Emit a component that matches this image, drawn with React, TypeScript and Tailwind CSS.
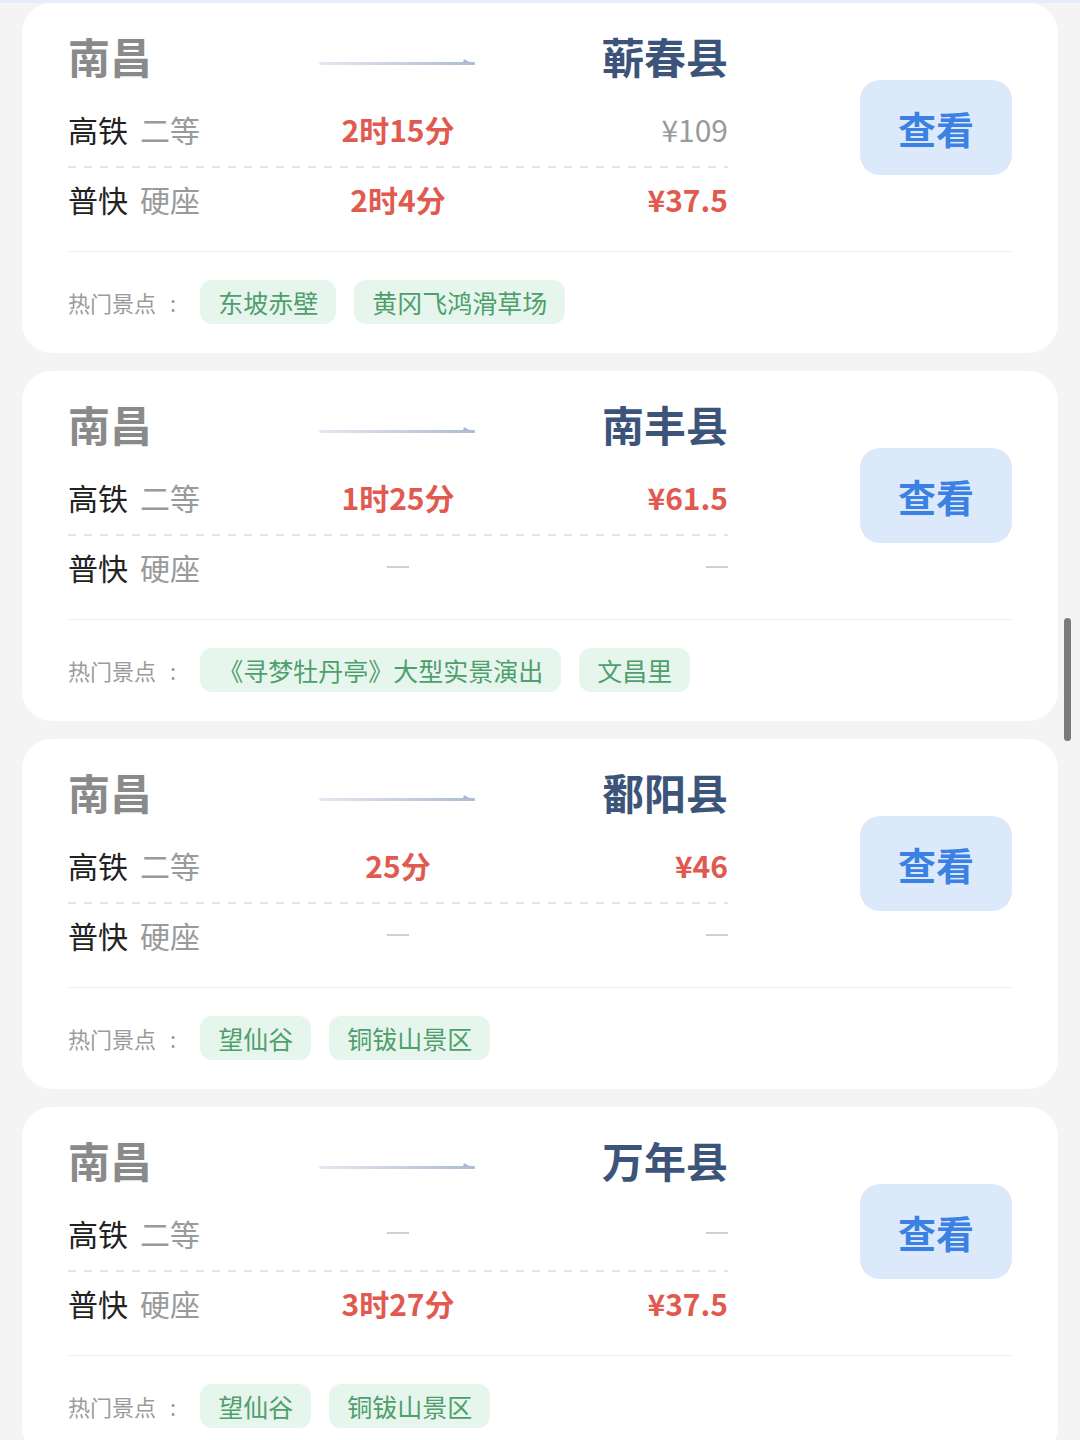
import React from 'react'

type Row = { label: string; seat: string; time?: string; price?: string; muted?: boolean }
type Route = { to: string; rows: Row[]; spots: string[] }

const routes: Route[] = [
  {
    to: '蕲春县',
    rows: [
      { label: '高铁', seat: '二等', time: '2时15分', price: '¥109', muted: true },
      { label: '普快', seat: '硬座', time: '2时4分', price: '¥37.5' },
    ],
    spots: ['东坡赤壁', '黄冈飞鸿滑草场'],
  },
  {
    to: '南丰县',
    rows: [
      { label: '高铁', seat: '二等', time: '1时25分', price: '¥61.5' },
      { label: '普快', seat: '硬座' },
    ],
    spots: ['《寻梦牡丹亭》大型实景演出', '文昌里'],
  },
  {
    to: '鄱阳县',
    rows: [
      { label: '高铁', seat: '二等', time: '25分', price: '¥46' },
      { label: '普快', seat: '硬座' },
    ],
    spots: ['望仙谷', '铜钹山景区'],
  },
  {
    to: '万年县',
    rows: [
      { label: '高铁', seat: '二等' },
      { label: '普快', seat: '硬座', time: '3时27分', price: '¥37.5' },
    ],
    spots: ['望仙谷', '铜钹山景区'],
  },
]

function Arrow() {
  return (
    <svg width="158" height="12" viewBox="0 0 158 12" className="mt-[10px]">
      <defs>
        <linearGradient id="arrowGrad" x1="0" x2="1" y1="0" y2="0">
          <stop offset="0" stopColor="#e3e8f0" />
          <stop offset="1" stopColor="#aebbd2" />
        </linearGradient>
      </defs>
      <rect x="0" y="7" width="156" height="3" rx="1.5" fill="url(#arrowGrad)" />
      <path d="M144 7.5 L156 7.5 L156 10 L145 4 Z" fill="#aebbd2" />
    </svg>
  )
}

function Dash() {
  return <span className="inline-block w-[22px] h-[2px] bg-[#cfcfcf]" />
}

function TrainRow({ row }: { row: Row }) {
  return (
    <div className="grid grid-cols-3 items-center h-[44px] text-[30px] leading-[44px]">
      <div className="flex items-center">
        <span className="text-[#222]">{row.label}</span>
        <span className="ml-[12px] text-[#9a9a9a]">{row.seat}</span>
      </div>
      <div className="flex justify-center items-center">
        {row.time ? <span className="font-bold text-[#e15a50]">{row.time}</span> : <Dash />}
      </div>
      <div className="flex justify-end items-center">
        {row.price ? (
          <span className={row.muted ? 'text-[#9a9a9a]' : 'font-bold text-[#e15a50]'}>{row.price}</span>
        ) : (
          <Dash />
        )}
      </div>
    </div>
  )
}

function RouteCard({ route }: { route: Route }) {
  return (
    <div className="mx-[22px] h-[350px] bg-white rounded-[30px] px-[46px] pt-[28px]">
      <div className="flex items-start justify-between">
        <div className="w-[660px]">
          {/* Title */}
          <div className="grid grid-cols-3 items-center h-[50px] text-[42px] leading-[50px] font-bold">
            <span className="text-[#8a8a8a]">南昌</span>
            <div className="flex justify-center">
              <Arrow />
            </div>
            <span className="text-right text-[#3c5479]">{route.to}</span>
          </div>

          <div className="mt-[26px]">
            <TrainRow row={route.rows[0]} />
          </div>
          <div className="mt-[15px] h-[2px] bg-[repeating-linear-gradient(90deg,#e3e6eb_0_8px,transparent_8px_16px)]" />
          <div className="mt-[9px]">
            <TrainRow row={route.rows[1]} />
          </div>
        </div>

        <button className="mt-[49px] w-[152px] h-[95px] rounded-[20px] bg-[#dbe9fb] text-[38px] font-bold text-[#3b81e4] leading-none">
          查看
        </button>
      </div>

      <div className="mt-[30px] h-[1px] bg-[#efefef]" />

      {/* Spots */}
      <div className="mt-[28px] flex items-center h-[44px]">
        <span className="text-[22px] text-[#9b9b9b]">热门景点</span>
        <span className="ml-[14px] text-[22px] text-[#9b9b9b]">:</span>
        <div className="ml-[24px] flex gap-[18px]">
          {route.spots.map((s) => (
            <span key={s} className="h-[44px] px-[18px] rounded-[12px] bg-[#e7f6ed] text-[25px] leading-[44px] text-[#4f9e6d]">
              {s}
            </span>
          ))}
        </div>
      </div>
    </div>
  )
}

export default function App() {
  return (
    <div
      className="relative w-[1080px] h-[1440px] overflow-hidden bg-[#f4f4f5]"
      style={{ fontFamily: '"Noto Sans CJK SC", "Noto Sans", sans-serif' }}
    >
      <div className="h-[3px] bg-[#e6edf9]" />
      <div className="flex flex-col gap-[18px]">
        {routes.map((r) => (
          <RouteCard key={r.to} route={r} />
        ))}
      </div>

      {/* Scrollbar */}
      <div className="absolute left-[1064px] top-[618px] w-[7px] h-[123px] rounded-full bg-[#7a7a7a]" />
    </div>
  )
}
